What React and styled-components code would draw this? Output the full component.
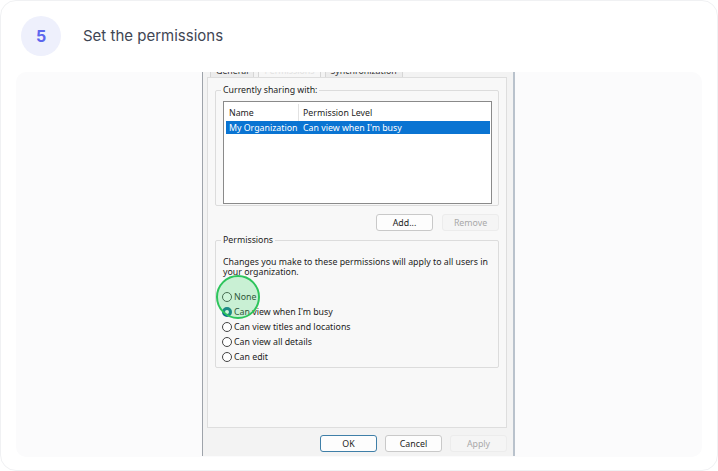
import styled, { createGlobalStyle } from "styled-components";

// Data
const radios = [
  { label: "None", checked: false },
  { label: "Can view when I'm busy", checked: true },
  { label: "Can view titles and locations", checked: false },
  { label: "Can view all details", checked: false },
  { label: "Can edit", checked: false },
];

// Component
function App() {
  return (
    <>
      <GlobalStyle />
      <Card>
        <StepHeader>
          <StepNumber>5</StepNumber>
          <StepTitle>Set the permissions</StepTitle>
        </StepHeader>
        <Shot>
          <Dialog>
            <Tabs>
              <Tab>General</Tab>
              <Tab faded>Permissions</Tab>
              <Tab>Synchronization</Tab>
            </Tabs>
            <TabPanel>
              <Group height={116}>
                <Legend>Currently sharing with:</Legend>
                <ListView>
                  <ListHead>
                    <NameCol>Name</NameCol>
                    <LevelCol>Permission Level</LevelCol>
                  </ListHead>
                  <ListRow selected>
                    <NameCol>My Organization</NameCol>
                    <LevelCol>Can view when I'm busy</LevelCol>
                  </ListRow>
                </ListView>
              </Group>
              <ButtonRow>
                <WinButton>Add...</WinButton>
                <WinButton disabled>Remove</WinButton>
              </ButtonRow>
              <Group height={128}>
                <Legend>Permissions</Legend>
                <Note>
                  Changes you make to these permissions will apply to all users in
                  your organization.
                </Note>
                <RadioList>
                  {radios.map((r) => (
                    <RadioRow key={r.label}>
                      <Radio checked={r.checked} />
                      {r.label}
                    </RadioRow>
                  ))}
                </RadioList>
                <Highlight />
              </Group>
            </TabPanel>
            <Footer>
              <WinButton focused>OK</WinButton>
              <WinButton>Cancel</WinButton>
              <WinButton disabled>Apply</WinButton>
            </Footer>
          </Dialog>
        </Shot>
      </Card>
    </>
  );
}

// Style
const GlobalStyle = createGlobalStyle`
  body {
    margin: 0;
    background: #ffffff;
    font-family: Inter, "Noto Sans", sans-serif;
  }
`;

const Card = styled.div`
  width: 718px;
  height: 471px;
  box-sizing: border-box;
  border: 1px solid #f0f1f3;
  border-radius: 16px;
  background: #ffffff;
  padding: 0 15px 13px 15px;
  display: flex;
  flex-direction: column;
`;

const StepHeader = styled.div`
  height: 71px;
  display: flex;
  align-items: center;
  gap: 22px;
  padding-left: 5px;
  padding-bottom: 2px;
  box-sizing: border-box;
`;

const StepNumber = styled.div`
  width: 40px;
  height: 40px;
  border-radius: 50%;
  background: #eef0fc;
  color: #5d66ee;
  font-weight: 700;
  font-size: 16px;
  display: flex;
  align-items: center;
  justify-content: center;
`;

const StepTitle = styled.div`
  font-size: 15px;
  color: #3f4654;
`;

const Shot = styled.div`
  flex: 1;
  background: #fbfbfc;
  border-radius: 10px;
  display: flex;
  justify-content: center;
  overflow: hidden;
  padding-right: 1px;
`;

const Dialog = styled.div`
  position: relative;
  width: 313px;
  height: 384px;
  box-sizing: border-box;
  background: #f3f3f3;
  border-left: 1px solid #9ea3aa;
  border-right: 2px solid #b9c2cc;
  overflow: hidden;
  font-family: "Noto Sans", "Open Sans", sans-serif;
  font-size: 8.8px;
  color: #1c1c1c;
  display: flex;
  flex-direction: column;
  padding: 0 6px 0 4px;
`;

const Tabs = styled.div`
  display: flex;
  align-items: flex-end;
  height: 13px;
  margin-top: -8px;
  gap: 4px;
  padding-left: 3px;
`;

const Tab = styled.div`
  padding: 0 5px;
  height: 13px;
  line-height: 12px;
  box-sizing: border-box;
  border: 1px solid #d6d6d6;
  border-bottom: none;
  background: ${(p) => (p.faded ? "#f7f7f7" : "#ececec")};
  color: ${(p) => (p.faded ? "#e2e2e2" : "#333")};
`;

const TabPanel = styled.div`
  height: 351px;
  box-sizing: border-box;
  background: #f8f8f8;
  border: 1px solid #dedede;
  padding: 12px 7px 0 7px;
  display: flex;
  flex-direction: column;
`;

const Group = styled.div`
  position: relative;
  height: ${(p) => p.height}px;
  box-sizing: border-box;
  border: 1px solid #dcdcdc;
  border-radius: 2px;
  padding: 10px 6px 0 7px;
`;

const Legend = styled.div`
  position: absolute;
  top: -6px;
  left: 5px;
  padding: 0 2px;
  background: #f8f8f8;
  line-height: 11px;
`;

const ListView = styled.div`
  height: 103px;
  box-sizing: border-box;
  background: #ffffff;
  border: 1px solid #8a8a8a;
  padding: 2px 1px 0 2px;
`;

const ListHead = styled.div`
  display: flex;
  height: 17px;
  align-items: center;
`;

const ListRow = styled.div`
  display: flex;
  height: 13px;
  align-items: center;
  background: ${(p) => (p.selected ? "#0a74d2" : "transparent")};
  color: ${(p) => (p.selected ? "#ffffff" : "inherit")};
`;

const NameCol = styled.div`
  width: 73px;
  padding-left: 3px;
  box-sizing: border-box;
  border-right: 1px solid transparent;
  ${ListHead} & {
    border-right-color: #e2e2e2;
    align-self: stretch;
    display: flex;
    align-items: center;
  }
`;

const LevelCol = styled.div`
  padding-left: 4px;
`;

const ButtonRow = styled.div`
  display: flex;
  justify-content: flex-end;
  gap: 9px;
  padding: 8px 0 0 0;
  height: 34px;
  box-sizing: border-box;
`;

const WinButton = styled.div`
  width: 57px;
  height: 17px;
  box-sizing: border-box;
  display: flex;
  align-items: center;
  justify-content: center;
  border-radius: 3px;
  background: ${(p) => (p.disabled ? "#f5f5f5" : "#fdfdfd")};
  color: ${(p) => (p.disabled ? "#a8a8a8" : "#1c1c1c")};
  border: 1px solid
    ${(p) => (p.focused ? "#3f7fa8" : p.disabled ? "#ececec" : "#c9c9c9")};
`;

const Note = styled.div`
  line-height: 10px;
  padding-top: 6px;
  width: 274px;
`;

const RadioList = styled.div`
  display: flex;
  flex-direction: column;
  padding-top: 12px;
  margin-left: -1px;
`;

const RadioRow = styled.div`
  display: flex;
  align-items: center;
  gap: 2px;
  height: 15px;
`;

const Radio = styled.span`
  width: 10px;
  height: 10px;
  box-sizing: border-box;
  border-radius: 50%;
  border: ${(p) => (p.checked ? "3px solid #0a6c8c" : "1px solid #444")};
  background: #ffffff;
`;

const Highlight = styled.div`
  position: absolute;
  left: 0;
  top: 34px;
  width: 44px;
  height: 44px;
  box-sizing: border-box;
  border-radius: 50%;
  border: 2px solid #2ec45c;
  background: rgba(80, 220, 120, 0.28);
`;

const Footer = styled.div`
  display: flex;
  justify-content: flex-end;
  gap: 8px;
  padding-top: 7px;
`;

export default App;
